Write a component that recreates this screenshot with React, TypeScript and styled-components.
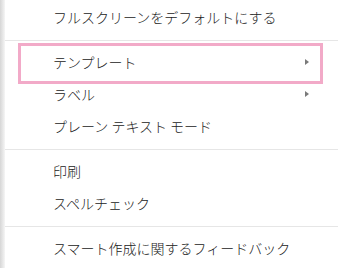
import React, { ReactElement } from 'react';
import styled, { createGlobalStyle } from 'styled-components';

const GlobalStyle = createGlobalStyle`
  html, body {
    margin: 0;
    padding: 0;
    background: #fff;
  }
  body {
    font-family: "Noto Sans CJK JP", "Noto Sans", sans-serif;
  }
`;

const Frame = styled.div`
  display: flex;
  width: 338px;
  height: 268px;
  overflow: hidden;
  background: #fff;
`;

const Edge = styled.div`
  width: 5px;
  flex: none;
  background: linear-gradient(to right, #d6d6d6, #ececec 70%, #f6f6f6);
`;

const Menu = styled.div`
  flex: 1;
  display: flex;
  flex-direction: column;
  padding-top: 1px;
`;

const Item = styled.div`
  position: relative;
  display: flex;
  align-items: center;
  height: 32px;
  padding: 0 29px 0 48px;
  font-size: 14px;
  font-weight: 300;
  color: #222;
  white-space: nowrap;
  cursor: default;
`;

const Highlight = styled.div`
  position: absolute;
  left: 13px;
  top: -3px;
  width: 305px;
  height: 41px;
  box-sizing: border-box;
  border: 3px solid #f2aac8;
  pointer-events: none;
`;

const Arrow = styled.span`
  margin-left: auto;
  width: 0;
  height: 0;
  border-top: 3.5px solid transparent;
  border-bottom: 3.5px solid transparent;
  border-left: 4px solid #7a7a7a;
`;

const Separator = styled.div`
  height: 1px;
  margin: 7px 0 5px;
  background: #e6e6e6;
`;

interface Entry {
  label: string;
  submenu?: boolean;
  highlight?: boolean;
}

const groups: Entry[][] = [
  [{ label: 'フルスクリーンをデフォルトにする' }],
  [
    { label: 'テンプレート', submenu: true, highlight: true },
    { label: 'ラベル', submenu: true },
    { label: 'プレーン テキスト モード' },
  ],
  [{ label: '印刷' }, { label: 'スペルチェック' }],
  [{ label: 'スマート作成に関するフィードバック' }],
];

const App = (): ReactElement => (
  <>
    <GlobalStyle />
    <Frame>
      <Edge />
      <Menu>
        {groups.map((group, gi) => (
          <React.Fragment key={gi}>
            {gi > 0 && <Separator />}
            {group.map((entry) => (
              <Item key={entry.label} role="menuitem">
                {entry.label}
                {entry.submenu && <Arrow />}
                {entry.highlight && <Highlight />}
              </Item>
            ))}
          </React.Fragment>
        ))}
      </Menu>
    </Frame>
  </>
);

export default App;
